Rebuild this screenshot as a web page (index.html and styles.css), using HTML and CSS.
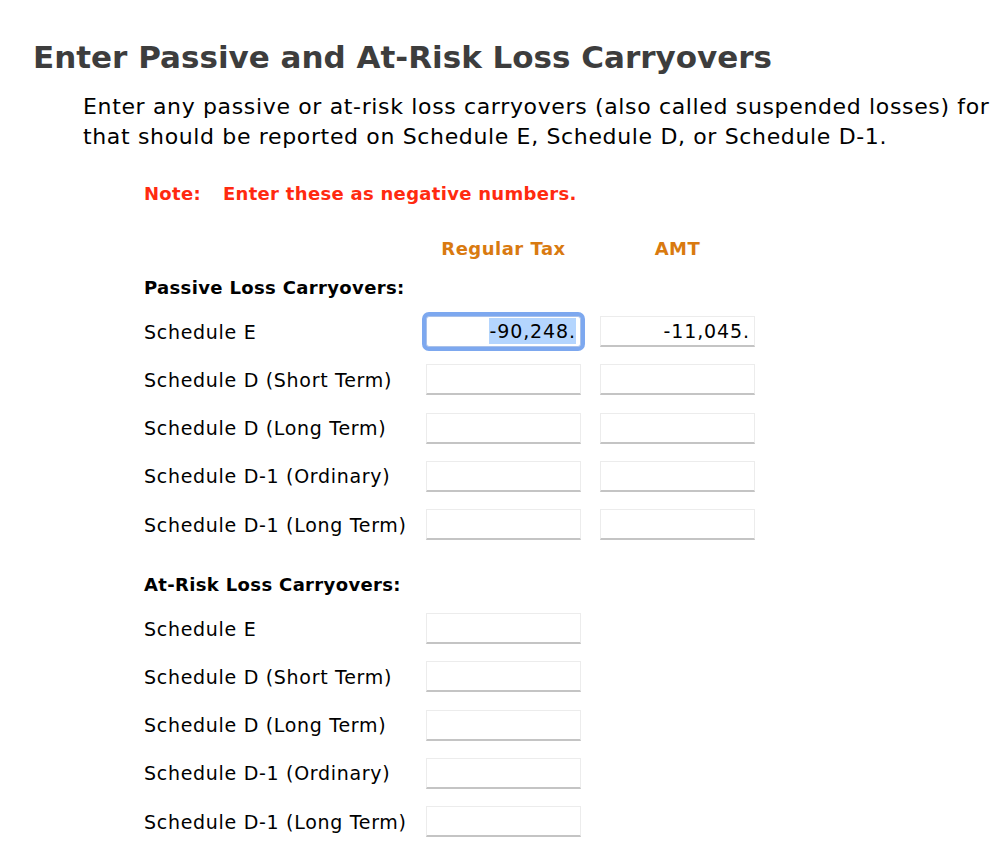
FILE: index.html
```html
<!DOCTYPE html>
<html>
<head>
<meta charset="utf-8">
<link rel="stylesheet" href="styles.css">
</head>
<body>
<h1 class="title">Enter Passive and At-Risk Loss Carryovers</h1>
<p class="intro">Enter any passive or at-risk loss carryovers (also called suspended losses) for that should be reported on Schedule E, Schedule D, or Schedule D-1.</p>
<div class="note"><span class="note-label">Note:</span><span>Enter these as negative numbers.</span></div>
<div class="form">
  <div class="row head-row">
    <div></div>
    <div class="col-head">Regular Tax</div>
    <div class="col-head">AMT</div>
  </div>
  <div class="section">Passive Loss Carryovers:</div>
  <div class="rows">
    <div class="row">
      <div class="label">Schedule E</div>
      <div class="field focused"><span class="sel">-90,248.</span></div>
      <div class="field">-11,045.</div>
    </div>
    <div class="row">
      <div class="label">Schedule D (Short Term)</div>
      <div class="field"></div>
      <div class="field"></div>
    </div>
    <div class="row">
      <div class="label">Schedule D (Long Term)</div>
      <div class="field"></div>
      <div class="field"></div>
    </div>
    <div class="row">
      <div class="label">Schedule D-1 (Ordinary)</div>
      <div class="field"></div>
      <div class="field"></div>
    </div>
    <div class="row">
      <div class="label">Schedule D-1 (Long Term)</div>
      <div class="field"></div>
      <div class="field"></div>
    </div>
  </div>
  <div class="section section-2">At-Risk Loss Carryovers:</div>
  <div class="rows">
    <div class="row">
      <div class="label">Schedule E</div>
      <div class="field"></div>
    </div>
    <div class="row">
      <div class="label">Schedule D (Short Term)</div>
      <div class="field"></div>
    </div>
    <div class="row">
      <div class="label">Schedule D (Long Term)</div>
      <div class="field"></div>
    </div>
    <div class="row">
      <div class="label">Schedule D-1 (Ordinary)</div>
      <div class="field"></div>
    </div>
    <div class="row">
      <div class="label">Schedule D-1 (Long Term)</div>
      <div class="field"></div>
    </div>
  </div>
</div>
</body>
</html>
```
FILE: styles.css
```css
html, body {
  margin: 0;
  padding: 0;
  background: #ffffff;
}
body {
  font-family: "DejaVu Sans", "Liberation Sans", sans-serif;
  color: #000;
  overflow: hidden;
  height: 859px;
}
.title {
  margin: 0;
  padding: 37px 0 0 33px;
  font-size: 31px;
  font-weight: bold;
  color: #3d3d3d;
  line-height: 40px;
  white-space: nowrap;
}
.intro {
  margin: 15px 0 0 83px;
  font-size: 22px;
  letter-spacing: 0.65px;
  line-height: 30px;
  width: 916px;
}
.note {
  margin: 30px 0 0 144px;
  color: #ff2a10;
  font-weight: bold;
  font-size: 18px;
  letter-spacing: 0.3px;
  line-height: 24px;
  display: flex;
}
.note-label {
  width: 79px;
}
.form {
  margin: 31px 0 0 144px;
  display: flex;
  flex-direction: column;
}
.row {
  display: grid;
  grid-template-columns: 263px 155px 155px;
  column-gap: 19px;
  align-items: center;
  height: 31px;
}
.head-row {
  height: 24px;
}
.col-head {
  color: #d97a10;
  font-weight: bold;
  font-size: 18px;
  letter-spacing: 0.5px;
  text-align: center;
  line-height: 24px;
}
.section {
  margin-top: 15px;
  font-weight: bold;
  font-size: 18px;
  letter-spacing: 0.35px;
  line-height: 24px;
  height: 24px;
}
.section-2 {
  margin-top: 33px;
}
.rows {
  margin-top: 16px;
  display: flex;
  flex-direction: column;
  gap: 17.25px;
}
.label {
  font-size: 19px;
  letter-spacing: 0.7px;
  white-space: nowrap;
}
.field {
  box-sizing: border-box;
  height: 31px;
  border: 1px solid #ececec;
  border-bottom: 2px solid #c4c4c4;
  background: #fff;
  text-align: right;
  font-size: 19px;
  letter-spacing: 0.9px;
  line-height: 28px;
  padding-right: 4px;
}
.field.focused {
  border: 1px solid #a9c1ea;
  box-shadow: 0 0 0 4px #7da8ef;
  border-radius: 3px;
}
.sel {
  background: #b4d5fe;
  display: inline-block;
  line-height: 26px;
}
```
